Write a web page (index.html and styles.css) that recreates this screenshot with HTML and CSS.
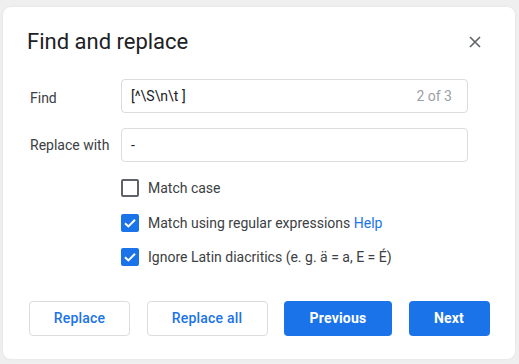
FILE: index.html
```html
<!DOCTYPE html>
<html>
<head>
<meta charset="utf-8">
<link rel="stylesheet" href="styles.css">
</head>
<body>
<div class="dialog">
  <div class="title-row">
    <h1 class="title">Find and replace</h1>
    <svg class="close" width="14" height="14" viewBox="0 0 14 14"><path d="M2 2 L12 12 M12 2 L2 12" stroke="#5f6368" stroke-width="1.6" fill="none"/></svg>
  </div>
  <div class="form">
    <label class="label">Find</label>
    <div class="input"><span class="value">[^\S\n\t ]</span><span class="count">2 of 3</span></div>
    <label class="label">Replace with</label>
    <div class="input"><span class="value">-</span></div>
  </div>
  <div class="options">
    <div class="opt"><span class="box"></span><span>Match case</span></div>
    <div class="opt"><span class="box checked"><svg width="18" height="18" viewBox="0 0 18 18"><path d="M4 9.2 L7.4 12.4 L14 5.8" stroke="#fff" stroke-width="2" fill="none"/></svg></span><span>Match using regular expressions <a class="help">Help</a></span></div>
    <div class="opt"><span class="box checked"><svg width="18" height="18" viewBox="0 0 18 18"><path d="M4 9.2 L7.4 12.4 L14 5.8" stroke="#fff" stroke-width="2" fill="none"/></svg></span><span>Ignore Latin diacritics (e. g. ä = a, E = É)</span></div>
  </div>
  <div class="buttons">
    <button class="btn outline w-replace">Replace</button>
    <button class="btn outline w-all">Replace all</button>
    <button class="btn primary w-prev">Previous</button>
    <button class="btn primary w-next">Next</button>
  </div>
</div>
</body>
</html>
```
FILE: styles.css
```css
html, body { margin: 0; padding: 0; }
body {
  background: #efefef;
  font-family: Roboto, "Liberation Sans", sans-serif;
  width: 519px;
  height: 364px;
  overflow: hidden;
  padding-top: 7px;
  box-sizing: border-box;
}
.dialog {
  margin-left: 3px;
  width: 512px;
  height: 352px;
  box-sizing: border-box;
  background: #fff;
  border-radius: 8px;
  padding: 21px 25px 24px 24px;
  box-shadow: 0 0 3px rgba(0,0,0,0.06);
}
.title-row {
  display: flex;
  align-items: center;
  justify-content: space-between;
  height: 28px;
}
.title {
  margin: 0;
  font-size: 22px;
  line-height: 28px;
  font-weight: 400;
  color: #202124;
}
.close { margin-right: 8px; }
.form {
  margin-top: 23px;
  margin-right: 22px;
  display: grid;
  grid-template-columns: 94px 1fr;
  row-gap: 15px;
  align-items: center;
}
.label {
  padding-left: 3px;
  font-size: 14px;
  color: #3c4043;
}
.label:first-child { padding-top: 3px; }
.input {
  height: 34px;
  box-sizing: border-box;
  border: 1px solid #dadce0;
  border-radius: 4px;
  display: flex;
  align-items: center;
  justify-content: space-between;
  padding: 0 15px 0 9px;
  font-size: 14px;
  color: #202124;
}
.count { color: #9aa0a6; }
.options {
  margin-top: 9px;
  margin-left: 94px;
}
.opt {
  height: 34.5px;
  display: flex;
  align-items: center;
  font-size: 14px;
  color: #3c4043;
}
.box {
  width: 18px;
  height: 18px;
  box-sizing: border-box;
  border: 2px solid #5f6368;
  border-radius: 2px;
  margin-right: 9px;
  display: flex;
  align-items: center;
  justify-content: center;
}
.box.checked {
  background: #1a73e8;
  border-color: #1a73e8;
}
.box svg { flex: none; }
.help { color: #1a73e8; }
.buttons {
  margin-top: 26px;
  margin-left: 2px;
  display: flex;
  gap: 16.5px;
}
.btn {
  height: 35px;
  border-radius: 4px;
  font-family: Roboto, "Liberation Sans", sans-serif;
  font-size: 14px;
  font-weight: 500;
  letter-spacing: 0.2px;
  cursor: pointer;
}
.outline {
  background: #fff;
  border: 1px solid #dadce0;
  color: #1a73e8;
}
.primary {
  background: #1a73e8;
  border: none;
  color: #fff;
  font-weight: 700;
}
.w-replace { width: 101px; }
.w-all { width: 121px; }
.w-prev { width: 108px; }
.w-next { width: 81px; }
```
